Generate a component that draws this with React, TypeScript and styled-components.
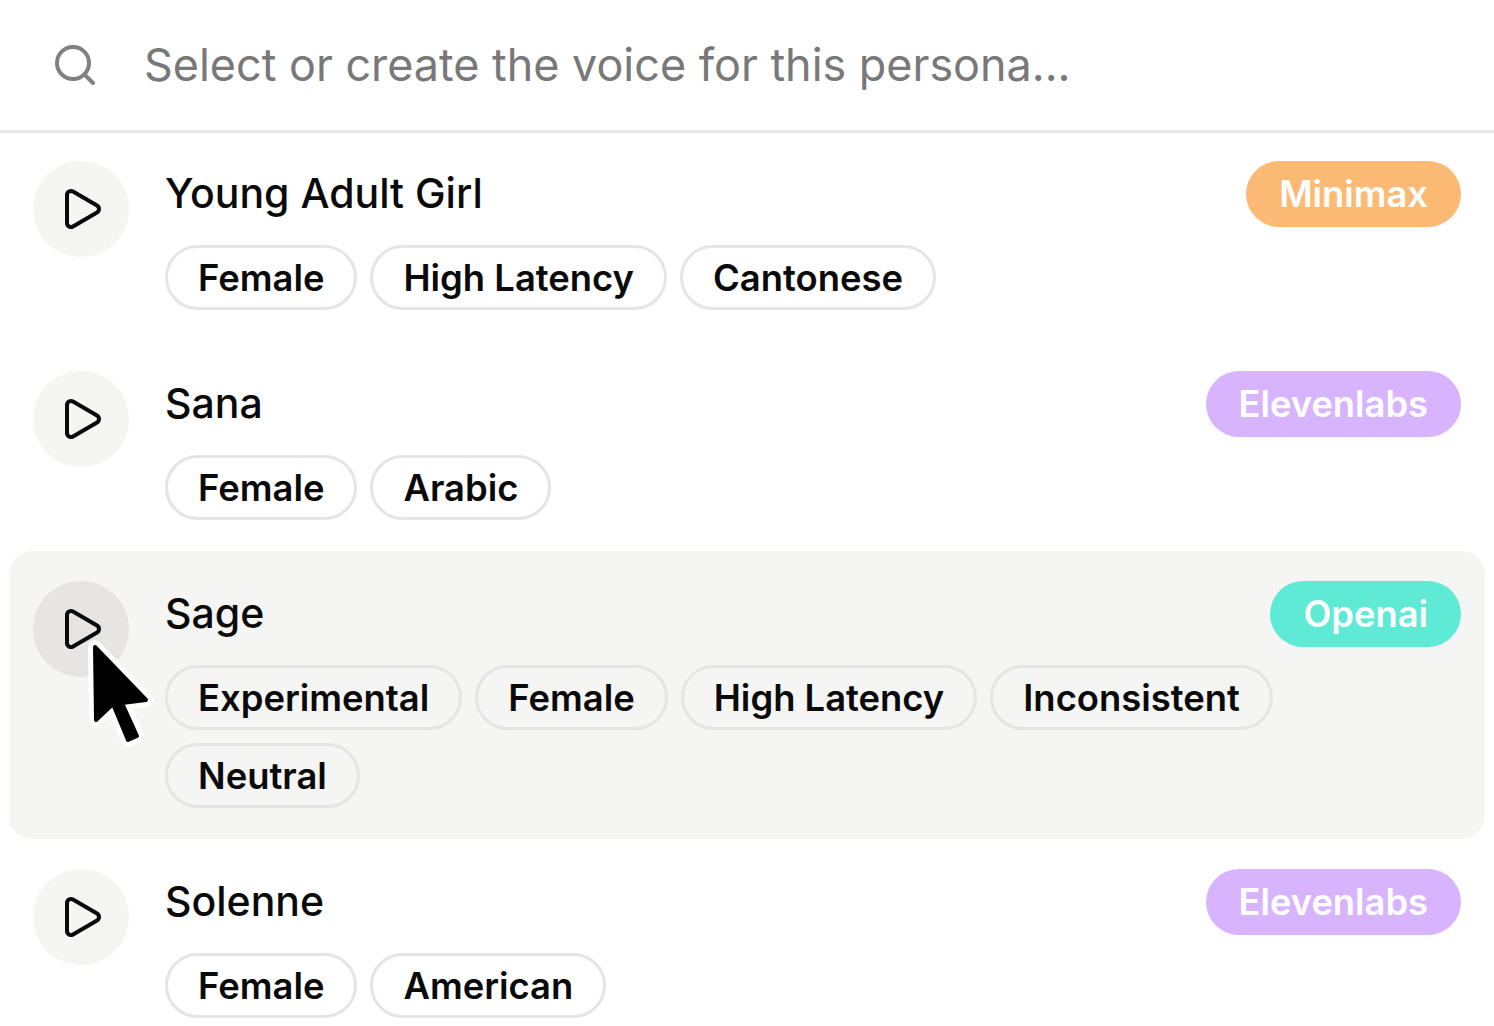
import styled, { createGlobalStyle } from "styled-components";
import { Play, Search } from "lucide-react";

type Provider = "Minimax" | "Elevenlabs" | "Openai";

interface Voice {
  name: string;
  provider: Provider;
  tags: string[];
  active?: boolean;
}

const voices: Voice[] = [
  {
    name: "Young Adult Girl",
    provider: "Minimax",
    tags: ["Female", "High Latency", "Cantonese"],
  },
  { name: "Sana", provider: "Elevenlabs", tags: ["Female", "Arabic"] },
  {
    name: "Sage",
    provider: "Openai",
    tags: ["Experimental", "Female", "High Latency", "Inconsistent", "Neutral"],
    active: true,
  },
  { name: "Solenne", provider: "Elevenlabs", tags: ["Female", "American"] },
];

const providerColors: Record<Provider, string> = {
  Minimax: "#fdba74",
  Elevenlabs: "#d8b4fe",
  Openai: "#5eead4",
};

const pointerPath = "M10 8 L61 61 L37 64 L52 97 L43 101 L28 65 L11 81 Z";

export default function App() {
  return (
    <>
      <GlobalStyle />
      <Panel>
        <SearchBar>
          <SearchIcon>
            <Search size={48} strokeWidth={2} />
          </SearchIcon>
          <SearchText>Select or create the voice for this persona...</SearchText>
        </SearchBar>
        <List>
          {voices.map((voice) => (
            <Row key={voice.name} $active={voice.active}>
              <PlayButton $active={voice.active}>
                <Play size={48} strokeWidth={2} />
                {voice.active && <Pointer />}
              </PlayButton>
              <Body>
                <Head>
                  <Name>{voice.name}</Name>
                  <Badge $provider={voice.provider}>{voice.provider}</Badge>
                </Head>
                <Tags>
                  {voice.tags.map((tag) => (
                    <Tag key={tag}>{tag}</Tag>
                  ))}
                </Tags>
              </Body>
            </Row>
          ))}
        </List>
      </Panel>
    </>
  );
}

const Pointer = () => (
  <PointerSvg viewBox="0 0 72 114" width="72" height="114">
    <path
      d={pointerPath}
      fill="#000"
      stroke="#fff"
      strokeWidth="14"
      strokeLinejoin="round"
    />
    <path
      d={pointerPath}
      fill="#000"
      stroke="#000"
      strokeWidth="4"
      strokeLinejoin="round"
    />
  </PointerSvg>
);

const GlobalStyle = createGlobalStyle`
  html,
  body {
    margin: 0;
    padding: 0;
    height: 100%;
    overflow: hidden;
    background: #fff;
  }

  * {
    box-sizing: border-box;
  }
`;

const Panel = styled.div`
  width: 1494px;
  height: 1026px;
  overflow: hidden;
  background: #fff;
  font-family: Inter, "Liberation Sans", sans-serif;
`;

const SearchBar = styled.div`
  display: flex;
  align-items: center;
  gap: 45px;
  height: 133px;
  padding-left: 51px;
  border-bottom: 3px solid #e7e7e7;
`;

const SearchIcon = styled.span`
  display: flex;
  color: #808080;
`;

const SearchText = styled.span`
  font-size: 44.9px;
  line-height: 60px;
  color: #787878;
`;

const List = styled.div`
  display: flex;
  flex-direction: column;
  margin-top: -2px;
  padding: 0 9px;
`;

const Row = styled.div<{ $active?: boolean }>`
  display: flex;
  gap: 36px;
  padding: 30px 24px 31px;
  border-radius: 24px;
  background: ${(props) => (props.$active ? "#f5f5f4" : "transparent")};
`;

const PlayButton = styled.div<{ $active?: boolean }>`
  position: relative;
  flex: none;
  display: flex;
  align-items: center;
  justify-content: center;
  width: 96px;
  height: 96px;
  border-radius: 50%;
  color: #0a0a0a;
  background: ${(props) => (props.$active ? "#e7e5e4" : "#f5f5f4")};
`;

const PointerSvg = styled.svg`
  position: absolute;
  top: 58px;
  left: 52px;
`;

const Body = styled.div`
  flex: 1;
  display: flex;
  flex-direction: column;
  gap: 18px;
  min-width: 0;
`;

const Head = styled.div`
  display: flex;
  align-items: flex-start;
  justify-content: space-between;
`;

const Name = styled.span`
  font-size: 41px;
  font-weight: 500;
  line-height: 64px;
  color: #0a0a0a;
`;

const Badge = styled.span<{ $provider: Provider }>`
  padding: 0 33px;
  border-radius: 33px;
  font-size: 36.3px;
  font-weight: 600;
  line-height: 66px;
  color: #fff;
  background: ${(props) => providerColors[props.$provider]};
`;

const Tags = styled.div`
  display: flex;
  flex-wrap: wrap;
  gap: 13px;
`;

const Tag = styled.span`
  padding: 1px 30px 0;
  border: 3px solid #e7e5e4;
  border-radius: 33px;
  font-size: 36.4px;
  font-weight: 600;
  line-height: 58px;
  color: #0a0a0a;
`;
